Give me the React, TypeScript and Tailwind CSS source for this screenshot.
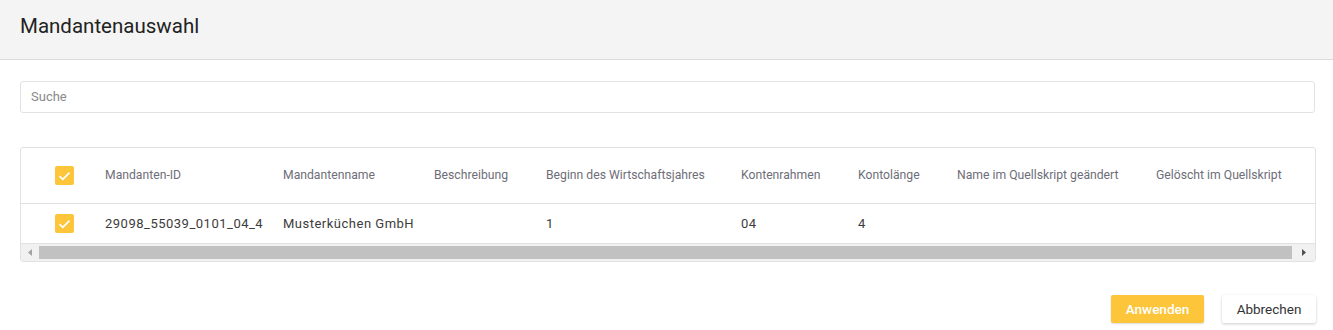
import React from 'react';

const columns = [
  { label: 'Mandanten-ID', w: 'w-[178px]' },
  { label: 'Mandantenname', w: 'w-[151px]' },
  { label: 'Beschreibung', w: 'w-[112px]' },
  { label: 'Beginn des Wirtschaftsjahres', w: 'w-[195px]' },
  { label: 'Kontenrahmen', w: 'w-[117px]' },
  { label: 'Kontolänge', w: 'w-[99px]' },
  { label: 'Name im Quellskript geändert', w: 'w-[199px]' },
  { label: 'Gelöscht im Quellskript', w: 'w-[150px]' },
];

const row = ['29098_55039_0101_04_4', 'Musterküchen GmbH', '', '1', '04', '4', '', ''];

function Check() {
  return (
    <div className="w-[19px] h-[19px] rounded-[2px] bg-[#fcc53a] flex items-center justify-center">
      <svg width="13" height="10" viewBox="0 0 13 10" fill="none">
        <path d="M1.5 5.2 L4.8 8.3 L11.5 1.6" stroke="white" strokeWidth="1.8" />
      </svg>
    </div>
  );
}

export default function App() {
  return (
    <div className="w-[1333px] h-[330px] bg-white font-['Roboto',sans-serif] overflow-hidden">
      {/* Header */}
      <div className="h-[60px] bg-[#f4f4f4] border-b border-[#dcdcdc] flex items-center px-5">
        <h1 className="text-[20.5px] text-[#222] leading-none -mt-[6px]">Mandantenauswahl</h1>
      </div>

      <div className="px-5 pt-[21px]">
        {/* Search */}
        <div className="w-[1295px] h-[32px] border border-[#e2e2e2] rounded-[3px] flex items-center px-[10px]">
          <span className="text-[13px] text-[#8a8a8a]">Suche</span>
        </div>

        {/* Table */}
        <div className="mt-[34px] w-[1296px] border border-[#e2e2e2] rounded-[3px] overflow-hidden">
          <div className="flex h-[56px] items-center border-b border-[#e2e2e2]">
            <div className="w-[84px] flex justify-center pl-[2px] shrink-0">
              <Check />
            </div>
            {columns.map((c) => (
              <div key={c.label} className={`${c.w} shrink-0 text-[12.2px] text-[#6e6e78] whitespace-nowrap`}>
                {c.label}
              </div>
            ))}
          </div>
          <div className="flex h-[40px] items-center border-b border-[#e2e2e2]">
            <div className="w-[84px] flex justify-center pl-[2px] shrink-0">
              <Check />
            </div>
            {columns.map((c, i) => (
              <div key={c.label} className={`${c.w} shrink-0 text-[13px] tracking-[0.5px] text-[#3c3c3c] whitespace-nowrap`}>
                {row[i]}
              </div>
            ))}
          </div>
          {/* Scrollbar */}
          <div className="h-[17px] bg-[#f1f1f1] flex items-center">
            <div className="w-[17px] flex justify-center">
              <svg width="4" height="7" viewBox="0 0 4 7"><path d="M4 0 L0 3.5 L4 7 Z" fill="#a3a3a3" /></svg>
            </div>
            <div className="w-[1253px] h-[13px] bg-[#c1c1c1] ml-px" />
            <div className="flex-1 flex justify-center">
              <svg width="4" height="7" viewBox="0 0 4 7"><path d="M0 0 L4 3.5 L0 7 Z" fill="#505050" /></svg>
            </div>
          </div>
        </div>

        {/* Buttons */}
        <div className="mt-[33px] flex justify-end gap-[18px] w-[1296px]">
          <button className="w-[93px] h-[28px] rounded-[2px] bg-[#fcc53a] text-white text-[13.5px] font-medium shadow-[0_1px_2px_rgba(0,0,0,0.15)]">
            Anwenden
          </button>
          <button className="w-[94px] h-[28px] rounded-[2px] bg-white text-[#333] text-[13.5px] shadow-[0_1px_3px_rgba(0,0,0,0.2)]">
            Abbrechen
          </button>
        </div>
      </div>
    </div>
  );
}
